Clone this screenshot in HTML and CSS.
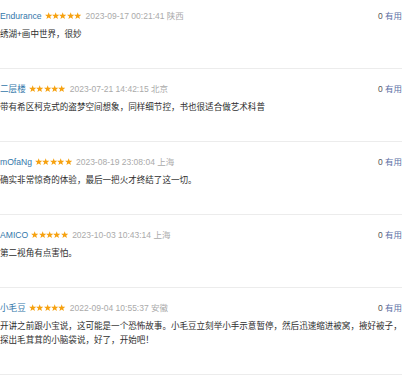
FILE: index.html
```html
<!DOCTYPE html>
<html lang="zh-CN">
<head>
<meta charset="utf-8">
<link rel="stylesheet" href="styles.css">
</head>
<body>
<svg width="0" height="0" class="defs">
  <defs>
    <symbol id="star" viewBox="0 0 10 10">
      <polygon points="5,0.2 6.25,3.6 9.9,3.7 7.05,6 8.1,9.6 5,7.5 1.9,9.6 2.95,6 0.1,3.7 3.75,3.6" fill="#f6a10f"/>
    </symbol>
  </defs>
</svg>
<div class="list">
  <div class="review">
    <div class="head">
      <div class="info">
        <span class="name">Endurance</span>
        <span class="stars"><svg><use href="#star"/></svg><svg><use href="#star"/></svg><svg><use href="#star"/></svg><svg><use href="#star"/></svg><svg><use href="#star"/></svg></span>
        <span class="time">2023-09-17 00:21:41 陕西</span>
      </div>
      <div class="vote"><span class="count">0</span> <span class="useful">有用</span></div>
    </div>
    <p class="text">绣湖+画中世界，很妙</p>
  </div>
  <div class="review">
    <div class="head">
      <div class="info">
        <span class="name">二层楼</span>
        <span class="stars"><svg><use href="#star"/></svg><svg><use href="#star"/></svg><svg><use href="#star"/></svg><svg><use href="#star"/></svg><svg><use href="#star"/></svg></span>
        <span class="time">2023-07-21 14:42:15 北京</span>
      </div>
      <div class="vote"><span class="count">0</span> <span class="useful">有用</span></div>
    </div>
    <p class="text">带有希区柯克式的盗梦空间想象，同样细节控，书也很适合做艺术科普</p>
  </div>
  <div class="review">
    <div class="head">
      <div class="info">
        <span class="name">mOfaNg</span>
        <span class="stars"><svg><use href="#star"/></svg><svg><use href="#star"/></svg><svg><use href="#star"/></svg><svg><use href="#star"/></svg><svg><use href="#star"/></svg></span>
        <span class="time">2023-08-19 23:08:04 上海</span>
      </div>
      <div class="vote"><span class="count">0</span> <span class="useful">有用</span></div>
    </div>
    <p class="text">确实非常惊奇的体验，最后一把火才终结了这一切。</p>
  </div>
  <div class="review">
    <div class="head">
      <div class="info">
        <span class="name">AMICO</span>
        <span class="stars"><svg><use href="#star"/></svg><svg><use href="#star"/></svg><svg><use href="#star"/></svg><svg><use href="#star"/></svg><svg><use href="#star"/></svg></span>
        <span class="time">2023-10-03 10:43:14 上海</span>
      </div>
      <div class="vote"><span class="count">0</span> <span class="useful">有用</span></div>
    </div>
    <p class="text">第二视角有点害怕。</p>
  </div>
  <div class="review">
    <div class="head">
      <div class="info">
        <span class="name">小毛豆</span>
        <span class="stars"><svg><use href="#star"/></svg><svg><use href="#star"/></svg><svg><use href="#star"/></svg><svg><use href="#star"/></svg><svg><use href="#star"/></svg></span>
        <span class="time">2022-09-04 10:55:37 安徽</span>
      </div>
      <div class="vote"><span class="count">0</span> <span class="useful">有用</span></div>
    </div>
    <p class="text">开讲之前跟小宝说，这可能是一个恐怖故事。小毛豆立刻举小手示意暂停，然后迅速缩进被窝，掖好被子，探出毛茸茸的小脑袋说，好了，开始吧！</p>
  </div>
</div>
</body>
</html>
```

FILE: styles.css
```css
html, body {
  margin: 0;
  padding: 0;
  background: #fff;
}
body {
  font-family: "Liberation Sans", "Noto Sans CJK SC", sans-serif;
  overflow: hidden;
}
.defs {
  position: absolute;
  width: 0;
  height: 0;
}
.list {
  width: 402px;
}
.review {
  padding: 14px 0 28px;
  border-bottom: 1px solid #ececec;
}
.review:first-child {
  padding-top: 10px;
}
.head {
  display: flex;
  justify-content: space-between;
  align-items: center;
  height: 12px;
}
.info {
  display: flex;
  align-items: center;
  white-space: nowrap;
}
.name {
  font-size: 8.6px;
  color: #3377aa;
  line-height: 12px;
}
.stars {
  display: flex;
  margin: 0 4px 0 3px;
}
.stars svg {
  width: 7.4px;
  height: 7.4px;
}
.time {
  font-size: 8.5px;
  color: #aaaaaa;
  line-height: 12px;
}
.vote {
  font-size: 8.5px;
  line-height: 12px;
  white-space: nowrap;
}
.count {
  color: #555;
}
.useful {
  color: #5c6fa6;
}
.text {
  margin: 4px 0 0;
  font-size: 8.55px;
  line-height: 14px;
  color: #2e2e2e;
  font-family: "Noto Sans CJK SC", "Liberation Sans", sans-serif;
}
```
